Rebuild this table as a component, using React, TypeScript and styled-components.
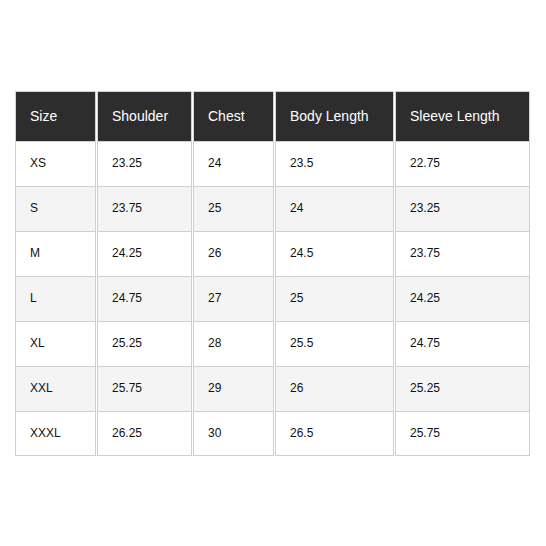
import styled, { createGlobalStyle } from 'styled-components'

const GlobalStyle = createGlobalStyle`
  html, body {
    margin: 0;
    padding: 0;
    background: #ffffff;
    font-family: "Liberation Sans", Arial, sans-serif;
  }
`

const columns = [
  { label: 'Size', width: 81 },
  { label: 'Shoulder', width: 95 },
  { label: 'Chest', width: 81 },
  { label: 'Body Length', width: 119 },
  { label: 'Sleeve Length', width: 135 },
]

const rows = [
  ['XS', '23.25', '24', '23.5', '22.75'],
  ['S', '23.75', '25', '24', '23.25'],
  ['M', '24.25', '26', '24.5', '23.75'],
  ['L', '24.75', '27', '25', '24.25'],
  ['XL', '25.25', '28', '25.5', '24.75'],
  ['XXL', '25.75', '29', '26', '25.25'],
  ['XXXL', '26.25', '30', '26.5', '25.75'],
]

export default function App() {
  return (
    <>
      <GlobalStyle />
      <Page>
        <SizeTable>
          <colgroup>
            {columns.map((c) => (
              <col key={c.label} style={{ width: c.width }} />
            ))}
          </colgroup>
          <thead>
            <tr>
              {columns.map((c) => (
                <HeadCell key={c.label}>{c.label}</HeadCell>
              ))}
            </tr>
          </thead>
          <tbody>
            {rows.map((r, i) => (
              <BodyRow key={r[0]} $striped={i % 2 === 1}>
                {r.map((v, j) => (
                  <BodyCell key={j}>{v}</BodyCell>
                ))}
              </BodyRow>
            ))}
          </tbody>
        </SizeTable>
      </Page>
    </>
  )
}

const Page = styled.div`
  width: 546px;
  height: 546px;
  padding: 91px 0 0 14px;
  box-sizing: border-box;
`

const SizeTable = styled.table`
  border-collapse: separate;
  border-spacing: 1px 0;
  table-layout: fixed;
  width: 517px;
`

const HeadCell = styled.th`
  box-sizing: border-box;
  height: 50px;
  padding: 0 0 2px 14px;
  text-align: left;
  font-weight: normal;
  font-size: 14px;
  color: #ffffff;
  background: #2d2d2d;
  border: 1px solid #d4d4d4;
  border-bottom: none;
`

const BodyRow = styled.tr<{ $striped: boolean }>`
  background: ${(p) => (p.$striped ? '#f4f4f4' : '#ffffff')};
`

const BodyCell = styled.td`
  box-sizing: border-box;
  height: 45px;
  padding: 0 0 2px 14px;
  font-size: 12px;
  color: #111111;
  border: 1px solid #d0d0d0;
  border-bottom: none;

  tr:last-child > & {
    border-bottom: 1px solid #d0d0d0;
  }
`
